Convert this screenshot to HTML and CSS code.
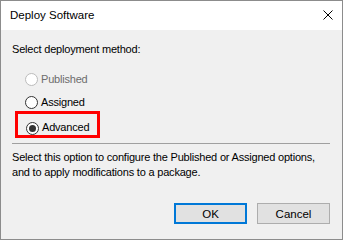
FILE: index.html
```html
<!DOCTYPE html>
<html lang="en">
<head>
    <meta charset="UTF-8">
    <meta name="viewport" content="width=device-width, initial-scale=1.0">
    <title>Deploy Software</title>
    <link rel="stylesheet" href="styles.css">
</head>
<body>
    <div class="window">
        <div class="title-bar">
            <span class="title">Deploy Software</span>
            <svg class="close" width="10" height="10" viewBox="0 0 10 10">
                <path d="M0.5 0.5 L9.5 9.5 M9.5 0.5 L0.5 9.5" stroke="#000" stroke-width="1" fill="none"/>
            </svg>
        </div>
        <div class="content">
            <div class="label">Select deployment method:</div>
            <div class="options">
                <div class="option disabled">
                    <span class="radio"></span>
                    <span>Published</span>
                </div>
                <div class="option">
                    <span class="radio"></span>
                    <span>Assigned</span>
                </div>
                <div class="option highlight">
                    <span class="radio checked"></span>
                    <span>Advanced</span>
                </div>
            </div>
            <div class="separator"></div>
            <div class="description">
                <div>Select this option to configure the Published or Assigned options,</div>
                <div>and to apply modifications to a package.</div>
            </div>
            <div class="buttons">
                <button class="btn default">OK</button>
                <button class="btn">Cancel</button>
            </div>
        </div>
    </div>
</body>
</html>
```

FILE: styles.css
```css
html, body {
    margin: 0;
    padding: 0;
}
body {
    font-family: "Liberation Sans", Arial, sans-serif;
    font-size: 11px;
    letter-spacing: -0.2px;
    color: #000;
    background: #fff;
}
.window {
    width: 343px;
    height: 240px;
    box-sizing: border-box;
    border: 1px solid #8c8c8c;
    display: flex;
    flex-direction: column;
    background: #f0f0f0;
}
.title-bar {
    height: 29px;
    background: #fff;
    display: flex;
    align-items: center;
    padding: 0 9px 0 9px;
    flex-shrink: 0;
}
.title {
    flex: 1;
    font-size: 11.5px;
    letter-spacing: 0;
    line-height: 15px;
    padding-bottom: 1px;
}
.close {
    display: block;
    margin-bottom: 1px;
}
.content {
    flex: 1;
    display: flex;
    flex-direction: column;
    padding: 12px 12px 15px 11px;
    line-height: 15px;
}
.options {
    display: flex;
    flex-direction: column;
    align-items: flex-start;
    padding-top: 15px;
}
.option {
    display: flex;
    align-items: center;
    margin-left: 13px;
    height: 15px;
    margin-bottom: 8px;
}
.option .radio {
    width: 13px;
    height: 13px;
    box-sizing: border-box;
    border: 1px solid #333;
    border-radius: 50%;
    background: #fff;
    margin-right: 3px;
    display: flex;
    align-items: center;
    justify-content: center;
}
.option .radio.checked::after {
    content: "";
    width: 7px;
    height: 7px;
    border-radius: 50%;
    background: #333;
}
.option.disabled {
    color: #6d6d6d;
}
.option.disabled .radio {
    border-color: #bcbcbc;
}
.option.highlight {
    margin-left: 3px;
    margin-top: -7px;
    margin-bottom: 0;
    height: 21px;
    border: 3px solid #f00;
    padding: 0 8px 0 8px;
    align-items: flex-end;
}
.separator {
    border-top: 1px solid #a0a0a0;
    margin-top: 5px;
}
.description {
    margin-top: 6px;
    white-space: nowrap;
}
.buttons {
    margin-top: auto;
    display: flex;
    justify-content: flex-end;
    gap: 10px;
}
.btn {
    width: 73px;
    height: 21px;
    box-sizing: border-box;
    font-family: inherit;
    font-size: 11.5px;
    color: #000;
    background: #e1e1e1;
    border: 1px solid #adadad;
    padding: 0;
}
.btn.default {
    border: 2px solid #0078d7;
}
```
